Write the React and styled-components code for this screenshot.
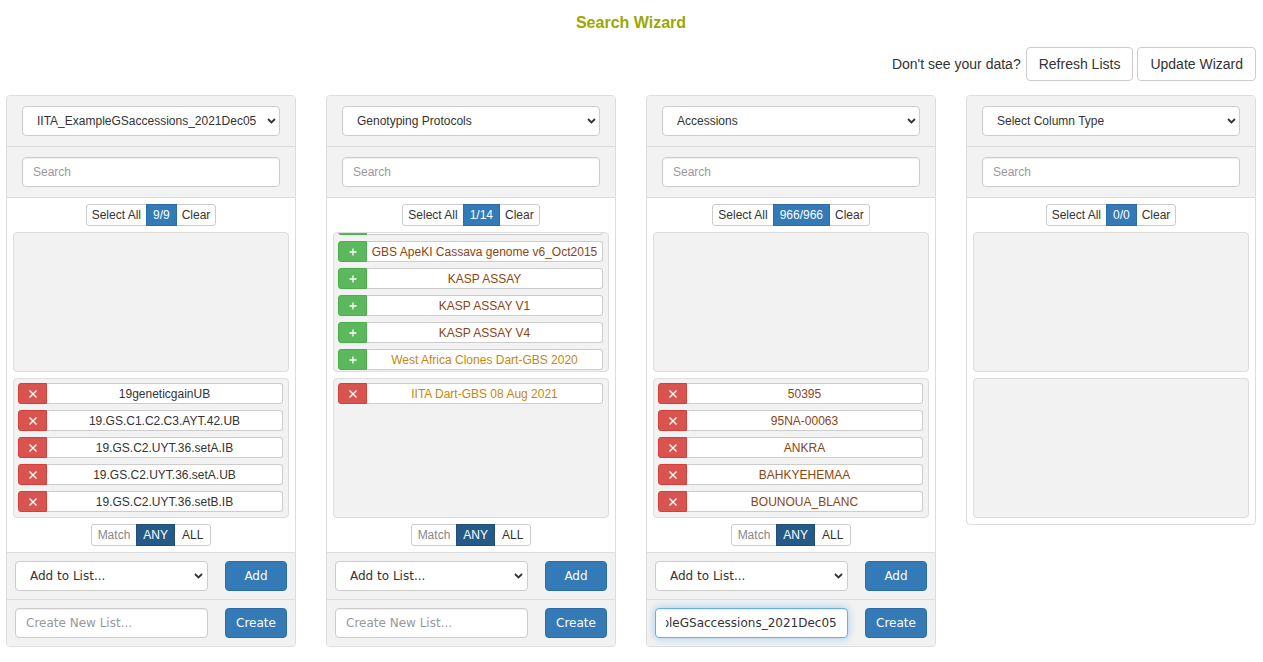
import React, { useEffect, useRef } from "react";
import styled, { createGlobalStyle, css } from "styled-components";

const Global = createGlobalStyle`
  * { box-sizing: border-box; }
  body {
    margin: 0;
    background: #fff;
    color: #333;
    font-family: "Liberation Sans", Arial, Helvetica, sans-serif;
  }
`;

const Page = styled.div`
  padding: 0 7px 0 6px;
`;

const Title = styled.h1`
  margin: 0;
  padding-top: 13px;
  text-align: center;
  font-size: 16px;
  line-height: 20px;
  font-weight: bold;
  color: #9aa800;
`;

const Toolbar = styled.div`
  display: flex;
  justify-content: flex-end;
  align-items: center;
  gap: 4px;
  margin-top: 14px;
  height: 34px;
`;

const Hint = styled.span`
  font-size: 14px;
  margin-right: 1px;
`;

const DefaultButton = styled.button`
  height: 34px;
  padding: 0 12px;
  font-family: "Liberation Sans", Arial, sans-serif;
  font-size: 14px;
  color: #333;
  background: #fff;
  border: 1px solid #ccc;
  border-radius: 4px;
`;

const Columns = styled.div`
  display: flex;
  align-items: flex-start;
  gap: 30px;
  margin-top: 14px;
`;

const Panel = styled.div`
  width: 290px;
  border: 1px solid #ddd;
  border-radius: 4px;
  background: #fff;
  overflow: hidden;
`;

const HeadSection = styled.div`
  background: #f2f2f2;
  padding: 10px 15px;
  border-bottom: 1px solid #ddd;
`;

const SelectWrap = styled.div`
  position: relative;
`;

const Chevron = styled.svg`
  position: absolute;
  right: ${(p) => p.$right}px;
  top: 50%;
  margin-top: -3px;
  pointer-events: none;
`;

const Select = styled.select`
  appearance: none;
  -webkit-appearance: none;
  width: 100%;
  height: 30px;
  border: 1px solid #ccc;
  border-radius: 4px;
  background: #fff;
  color: #333;
  padding: 0 12px 0 14px;
  font-size: 12px;
  font-family: ${(p) =>
    p.$wide ? `"DejaVu Sans", Verdana, sans-serif` : `"Liberation Sans", Arial, sans-serif`};
  outline: none;
`;

const SearchInput = styled.input`
  width: 100%;
  height: 30px;
  border: 1px solid #ccc;
  border-radius: 4px;
  background: #fff;
  padding: 0 10px;
  font-size: 12px;
  font-family: "Liberation Sans", Arial, sans-serif;
  color: #333;
  box-shadow: inset 0 1px 1px rgba(0, 0, 0, 0.075);
  outline: none;
  &::placeholder { color: #999; }
`;

const Body = styled.div`
  display: flex;
  flex-direction: column;
  align-items: stretch;
  gap: 6px;
  padding: 6px;
`;

const Group = styled.div`
  align-self: center;
  display: inline-flex;
  height: 22px;
`;

const Segment = styled.span`
  display: inline-flex;
  align-items: center;
  height: 22px;
  padding: 0 ${(p) => p.$pad || 5}px;
  font-size: 12px;
  border: 1px solid #ccc;
  margin-left: -1px;
  background: #fff;
  color: ${(p) => (p.$muted ? "#888" : "#333")};
  &:first-child { margin-left: 0; border-radius: 3px 0 0 3px; }
  &:last-child { border-radius: 0 3px 3px 0; }
  ${(p) =>
    p.$active === "count" &&
    css`
      background: #337ab7;
      border-color: #2e6da4;
      color: #fff;
      position: relative;
    `}
  ${(p) =>
    p.$active === "dark" &&
    css`
      background: #265a88;
      border-color: #204d74;
      color: #fff;
      position: relative;
    `}
`;

const ListBox = styled.div`
  height: 140px;
  background: #f2f2f2;
  border: 1px solid #ddd;
  border-radius: 4px;
  padding: 4px 5px 1px 4px;
  overflow: hidden;
  display: grid;
  grid-auto-rows: 21px;
  align-content: start;
  row-gap: 6px;
`;

const Row = styled.div`
  display: flex;
  height: 21px;
`;

const RowButton = styled.span`
  flex: 0 0 29px;
  display: flex;
  align-items: center;
  justify-content: center;
  border-radius: 3px 0 0 3px;
  background: ${(p) => (p.$add ? "#5cb85c" : "#d9534f")};
  border: 1px solid ${(p) => (p.$add ? "#4cae4c" : "#d43f3a")};
`;

const RowLabel = styled.span`
  flex: 1;
  min-width: 0;
  background: #fff;
  border: 1px solid #ccc;
  border-left: none;
  border-radius: 0 3px 3px 0;
  font-size: 12px;
  line-height: 20px;
  text-align: center;
  white-space: nowrap;
  overflow: hidden;
  color: ${(p) => p.$color};
`;

const Footer = styled.div`
  display: grid;
  grid-template-columns: 1fr 62px;
  column-gap: 17px;
  padding: 8px;
  background: #f2f2f2;
  border-top: 1px solid #ddd;
`;

const PrimaryButton = styled.button`
  height: 30px;
  background: #337ab7;
  border: 1px solid #2e6da4;
  border-radius: 4px;
  color: #fff;
  font-size: 12px;
  font-family: "DejaVu Sans", Verdana, sans-serif;
  padding: 0;
`;

const NewListInput = styled.input`
  width: 100%;
  height: 30px;
  border: 1px solid ${(p) => (p.$focused ? "#66afe9" : "#ccc")};
  border-radius: 4px;
  background: #fff;
  padding: 0 10px;
  font-size: 12px;
  font-family: "DejaVu Sans", Verdana, sans-serif;
  color: #333;
  outline: none;
  box-shadow: ${(p) =>
    p.$focused
      ? "inset 0 1px 1px rgba(0,0,0,.075), 0 0 8px rgba(102,175,233,.6)"
      : "inset 0 1px 1px rgba(0,0,0,.075)"};
  &::placeholder { color: #999; }
`;

const BROWN = "#8b4513";
const GOLD = "#c8860a";
const DARK = "#333";

const XIcon = () => (
  <svg width="10" height="10" viewBox="0 0 10 10">
    <path d="M1.5 1.5 L8.5 8.5 M8.5 1.5 L1.5 8.5" stroke="#fff" strokeWidth="1.4" fill="none" />
  </svg>
);

const PlusIcon = () => (
  <svg width="8" height="8" viewBox="0 0 8 8">
    <path d="M4 0.5 V7.5 M0.5 4 H7.5" stroke="#fff" strokeWidth="1.3" fill="none" />
  </svg>
);

const ChevronIcon = ({ right }) => (
  <Chevron $right={right} width="9" height="6" viewBox="0 0 9 6">
    <path d="M1 1 L4.5 4.5 L8 1" stroke="#333" strokeWidth="1.8" fill="none" />
  </Chevron>
);

function ItemList({ items, add, scrollToEnd }) {
  const ref = useRef(null);
  useEffect(() => {
    if (scrollToEnd && ref.current) ref.current.scrollTop = ref.current.scrollHeight;
  }, [scrollToEnd]);
  return (
    <ListBox ref={ref}>
      {items.map((it) => (
        <Row key={it.name}>
          <RowButton $add={add}>{add ? <PlusIcon /> : <XIcon />}</RowButton>
          <RowLabel $color={it.color}>{it.hidden ? "" : it.name}</RowLabel>
        </Row>
      ))}
    </ListBox>
  );
}

function Column({ type, count, available, selected, scrollAvailable, footer, focusedValue }) {
  const inputRef = useRef(null);
  useEffect(() => {
    const el = inputRef.current;
    if (el && focusedValue) {
      el.focus();
      const n = el.value.length;
      el.setSelectionRange(n, n);
      el.scrollLeft = el.scrollWidth;
    }
  }, [focusedValue]);
  return (
    <Panel>
      <HeadSection>
        <SelectWrap>
          <Select defaultValue={type}>
            <option>{type}</option>
          </Select>
          <ChevronIcon right={4} />
        </SelectWrap>
      </HeadSection>
      <HeadSection>
        <SearchInput placeholder="Search" />
      </HeadSection>
      <Body>
        <Group>
          <Segment>Select All</Segment>
          <Segment $active="count" $pad={6}>{count}</Segment>
          <Segment>Clear</Segment>
        </Group>
        <ItemList items={available} add scrollToEnd={scrollAvailable} />
        <ItemList items={selected} />
        {footer && (
          <Group>
            <Segment $muted $pad={6}>Match</Segment>
            <Segment $active="dark" $pad={6}>ANY</Segment>
            <Segment $pad={7}>ALL</Segment>
          </Group>
        )}
      </Body>
      {footer && (
        <>
          <Footer>
            <SelectWrap>
              <Select $wide defaultValue="Add to List...">
                <option>Add to List...</option>
              </Select>
              <ChevronIcon right={5} />
            </SelectWrap>
            <PrimaryButton>Add</PrimaryButton>
          </Footer>
          <Footer>
            <NewListInput
              ref={inputRef}
              placeholder="Create New List..."
              defaultValue={focusedValue || ""}
              $focused={!!focusedValue}
            />
            <PrimaryButton>Create</PrimaryButton>
          </Footer>
        </>
      )}
    </Panel>
  );
}

const mk = (names, color) => names.map((name) => ({ name, color }));

const trials = mk(
  [
    "19geneticgainUB",
    "19.GS.C1.C2.C3.AYT.42.UB",
    "19.GS.C2.UYT.36.setA.IB",
    "19.GS.C2.UYT.36.setA.UB",
    "19.GS.C2.UYT.36.setB.IB",
  ],
  DARK
);

const protocols = [
  { name: "GBS ApeKI Cassava genome v5", color: BROWN, hidden: true },
  ...mk(["GBS ApeKI Cassava genome v6_Oct2015", "KASP ASSAY", "KASP ASSAY V1", "KASP ASSAY V4"], BROWN),
  { name: "West Africa Clones Dart-GBS 2020", color: GOLD },
];

const accessions = mk(["50395", "95NA-00063", "ANKRA", "BAHKYEHEMAA", "BOUNOUA_BLANC"], BROWN);

export default function App() {
  return (
    <Page>
      <Global />
      <Title>Search Wizard</Title>
      <Toolbar>
        <Hint>Don't see your data?</Hint>
        <DefaultButton>Refresh Lists</DefaultButton>
        <DefaultButton>Update Wizard</DefaultButton>
      </Toolbar>
      <Columns>
        <Column
          type="IITA_ExampleGSaccessions_2021Dec05"
          count="9/9"
          available={[]}
          selected={trials}
          footer
        />
        <Column
          type="Genotyping Protocols"
          count="1/14"
          available={protocols}
          selected={[{ name: "IITA Dart-GBS 08 Aug 2021", color: GOLD }]}
          scrollAvailable
          footer
        />
        <Column
          type="Accessions"
          count="966/966"
          available={[]}
          selected={accessions}
          footer
          focusedValue="IITA_ExampleGSaccessions_2021Dec05"
        />
        <Column type="Select Column Type" count="0/0" available={[]} selected={[]} />
      </Columns>
    </Page>
  );
}
